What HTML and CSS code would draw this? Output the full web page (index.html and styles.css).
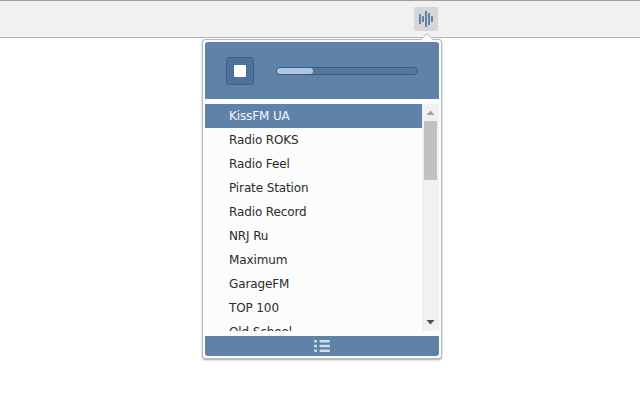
FILE: index.html
```html
<!DOCTYPE html>
<html lang="en">
<head>
<meta charset="utf-8">
<title>Radio</title>
<link rel="stylesheet" href="styles.css">
</head>
<body>
<header class="toolbar">
  <div class="ext-button">
    <svg width="24" height="24" viewBox="0 0 24 24" fill="#5f82a9">
      <rect x="5" y="7" width="2" height="10" rx=".5"/>
      <rect x="8" y="9" width="2" height="6" rx=".5"/>
      <rect x="11" y="4" width="2" height="16" rx=".5"/>
      <rect x="14" y="6" width="2" height="12" rx=".5"/>
      <rect x="17" y="9" width="2" height="6" rx=".5"/>
    </svg>
  </div>
</header>
<main class="popup">
  <svg class="arrow" width="14" height="8" viewBox="0 0 14 8">
    <path d="M0 7.5L7 .5L14 7.5V8H0Z" fill="#fcfcfc"/>
    <path d="M.5 7L7 .5L13.5 7" fill="none" stroke="#b4b4b4"/>
  </svg>
  <section class="player">
    <div class="stop"><span class="stop-mark"></span></div>
    <div class="volume"><div class="level"></div></div>
  </section>
  <section class="stations">
    <ul class="list">
      <li class="item active">KissFM UA</li>
      <li class="item">Radio ROKS</li>
      <li class="item">Radio Feel</li>
      <li class="item">Pirate Station</li>
      <li class="item">Radio Record</li>
      <li class="item">NRJ Ru</li>
      <li class="item">Maximum</li>
      <li class="item">GarageFM</li>
      <li class="item">TOP 100</li>
      <li class="item">Old School</li>
    </ul>
    <div class="scrollbar">
      <svg class="tip" width="17" height="17" viewBox="0 0 17 17"><path d="M4.5 11L8.5 6.5L12.5 11Z" fill="#a3a3a3"/></svg>
      <div class="thumb"></div>
      <svg class="tip" width="17" height="17" viewBox="0 0 17 17"><path d="M4.5 6L8.5 10.5L12.5 6Z" fill="#505050"/></svg>
    </div>
  </section>
  <footer class="footer">
    <svg width="16" height="12" viewBox="0 0 16 12" fill="#d0dcea">
      <rect x="0" y="0" width="3" height="2.4" rx=".8"/><rect x="5.5" y="0" width="10.5" height="2.4" rx=".8"/>
      <rect x="0" y="4.8" width="3" height="2.4" rx=".8"/><rect x="5.5" y="4.8" width="10.5" height="2.4" rx=".8"/>
      <rect x="0" y="9.6" width="3" height="2.4" rx=".8"/><rect x="5.5" y="9.6" width="10.5" height="2.4" rx=".8"/>
    </svg>
  </footer>
</main>
</body>
</html>
```
FILE: styles.css
```css
* { box-sizing: border-box; }
body {
  margin: 0;
  height: 400px;
  overflow: hidden;
  background: #fff;
  font: 12px/24px "DejaVu Sans", sans-serif;
  letter-spacing: -0.12px;
  color: #2b2b2b;
}
svg { display: block; }
.toolbar {
  display: flex;
  justify-content: flex-end;
  height: 38px;
  padding: 6px 202px 0 0;
  background: #f1f1f1;
  border-top: 1px solid #a0a0a0;
  border-bottom: 1px solid #b4b4b4;
}
.ext-button {
  width: 24px;
  height: 24px;
  border-radius: 2px;
  background: #d6d6d6;
}
.popup {
  position: relative;
  display: flex;
  flex-direction: column;
  gap: 5px;
  width: 240px;
  height: 320px;
  margin: 1px 0 0 202px;
  padding: 2px;
  background: #fcfcfc;
  border: 1px solid #b9b9b9;
  border-radius: 3px;
  box-shadow: 0 1px 2px rgba(0, 0, 0, .35);
}
.arrow {
  position: absolute;
  top: -7px;
  left: 217px;
}
.player {
  display: flex;
  align-items: center;
  gap: 22px;
  height: 57px;
  padding: 0 21px;
  background: #5f82a9;
  border-radius: 3px 3px 0 0;
}
.stop {
  display: grid;
  place-items: center;
  width: 28px;
  height: 28px;
  background: #4d719a;
  border: 1px solid #3b608c;
  border-radius: 3px;
}
.stop-mark {
  width: 12px;
  height: 12px;
  background: #fff;
  border-radius: 1px;
}
.volume {
  width: 142px;
  height: 8px;
  background: #557799;
  border: 1px solid #365b87;
  border-radius: 4px;
}
.level {
  width: 36px;
  height: 6px;
  background: #b0c5e0;
  border-radius: 3px;
}
.stations {
  display: flex;
  height: 227px;
  overflow: hidden;
}
.list {
  flex: 1;
  margin: 0;
  padding: 0;
  list-style: none;
}
.item {
  height: 24px;
  padding-left: 24px;
}
.active {
  background: #5f82a9;
  color: #f4f7fa;
}
.scrollbar {
  display: flex;
  flex-direction: column;
  width: 17px;
  background: #f1f1f1;
}
.thumb {
  width: 13px;
  height: 59px;
  margin: 0 2px auto;
  background: #c1c1c1;
}
.footer {
  display: grid;
  place-items: center;
  height: 20px;
  background: #5f82a9;
  border-radius: 0 0 3px 3px;
}
```
